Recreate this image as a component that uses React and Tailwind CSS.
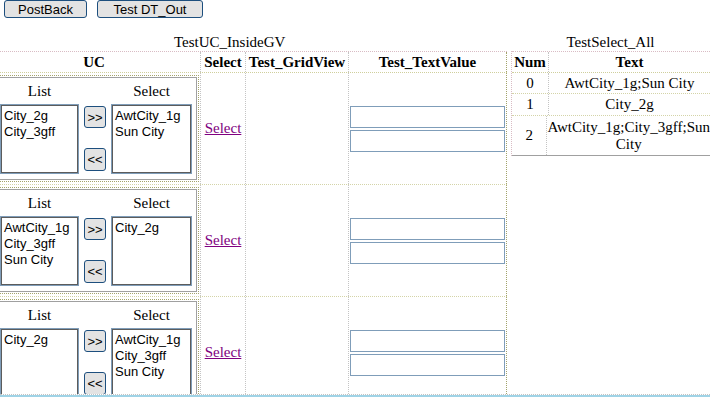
import React from "react";

const ucRows = [
  { list: ["City_2g", "City_3gff"], sel: ["AwtCity_1g", "Sun City"] },
  { list: ["AwtCity_1g", "City_3gff", "Sun City"], sel: ["City_2g"] },
  { list: ["City_2g"], sel: ["AwtCity_1g", "City_3gff", "Sun City"] },
];

const selectAll = [
  { num: "0", text: "AwtCity_1g;Sun City", h: "h-[21px]" },
  { num: "1", text: "City_2g", h: "h-[22px]" },
  { num: "2", text: "AwtCity_1g;City_3gff;Sun City", h: "h-[40px]" },
];

const XpButton = ({ children, className }) => (
  <button
    type="button"
    className={`flex items-center justify-center rounded-[3px] border border-[#1d4f7e] bg-[#e3e3e3] font-['Liberation_Sans',Arial,sans-serif] text-[13px] leading-none text-black ${className}`}
  >
    {children}
  </button>
);

const ListBox = ({ items, width }) => (
  <div
    className={`${width} h-[70px] border border-[#7f9db9] bg-white pl-[3px] pt-[3px] shadow-[inset_0_0_0_1px_#5c5c5c] font-['Liberation_Sans',Arial,sans-serif] text-[13px] leading-[16px] text-black`}
  >
    {items.map((item) => (
      <div key={item} className="whitespace-nowrap">
        {item}
      </div>
    ))}
  </div>
);

const UcBox = ({ row }) => (
  <div className="-ml-[3px] w-[202px] border border-dotted border-[#a3a36b] p-[1px]">
    <div className="border border-[#a0a0a0] pb-[5px]">
      <div className="flex h-[26px] items-center">
        <div className="w-[79px] text-center">List</div>
        <div className="w-[32px]" />
        <div className="w-[81px] text-center">Select</div>
      </div>
      <div className="flex">
        <ListBox items={row.list} width="w-[79px]" />
        <div className="flex w-[32px] flex-col gap-[20px] pl-[5px] pt-[2px]">
          <XpButton className="h-[22px] w-[22px]">&gt;&gt;</XpButton>
          <XpButton className="h-[23px] w-[22px]">&lt;&lt;</XpButton>
        </div>
        <ListBox items={row.sel} width="w-[81px]" />
      </div>
    </div>
  </div>
);

export default function App() {
  return (
    <div className="h-[397px] w-[710px] overflow-hidden border-b-2 border-[#9fd3e6] bg-white font-['Liberation_Serif',serif] text-[15px] text-black">
      <div className="h-[395px] overflow-hidden border-b border-dotted border-[#c4c4c4]">
        {/* buttons */}
        <div className="flex h-[18px] gap-[10px] pl-[4px]">
          <XpButton className="h-[18px] w-[83px]">PostBack</XpButton>
          <XpButton className="h-[18px] w-[106px]">Test DT_Out</XpButton>
        </div>

        <div className="mt-[15px] flex">
          {/* TestUC_InsideGV */}
          <div className="w-[507px]">
            <div className="h-[18px] pl-[174px] leading-[18px]">TestUC_InsideGV</div>
            <div className="flex h-[22px] border-y border-dotted border-t-[#d9bcc4] border-b-[#cfcf9c] font-bold leading-[20px]">
              <div className="w-[200px] pr-[12px] text-center">UC</div>
              <div className="w-[45px] border-l border-dotted border-[#c4c4c4] text-center">Select</div>
              <div className="w-[103px] border-l border-dotted border-[#c4c4c4] text-center">Test_GridView</div>
              <div className="w-[159px] border-x border-dotted border-l-[#c4c4c4] border-r-[#a3a36b] text-center">
                Test_TextValue
              </div>
            </div>
            {ucRows.map((row, i) => (
              <div key={i} className="flex h-[112px] border-b border-dotted border-[#d4d4a8]">
                <div className="w-[200px] pt-[2px]">
                  <UcBox row={row} />
                </div>
                <div className="flex w-[45px] items-center justify-center border-l border-dotted border-[#c4c4c4]">
                  <span className="cursor-pointer text-[#800080] underline">Select</span>
                </div>
                <div className="w-[103px] border-l border-dotted border-[#c4c4c4]" />
                <div className="flex w-[159px] flex-col justify-center gap-[2px] border-l border-r border-dotted border-l-[#c4c4c4] border-r-[#a3a36b] pl-[1px]">
                  <div className="h-[22px] w-[155px] border border-[#7f9db9] bg-white" />
                  <div className="h-[22px] w-[155px] border border-[#7f9db9] bg-white" />
                </div>
              </div>
            ))}
          </div>

          {/* TestSelect_All */}
          <div className="ml-[4px] w-[199px]">
            <div className="h-[18px] text-center leading-[18px]">TestSelect_All</div>
            <div className="border-l border-dotted border-[#d9bcc4]">
              <div className="flex h-[22px] border-y border-dotted border-t-[#d9bcc4] border-b-[#cfcf9c] font-bold leading-[20px]">
                <div className="w-[36px] text-center">Num</div>
                <div className="flex-1 border-l border-dotted border-[#c4c4c4] text-center">Text</div>
              </div>
              {selectAll.map((r, i) => (
                <div
                  key={r.num}
                  className={`flex ${r.h} border-b ${
                    i === selectAll.length - 1 ? "border-solid border-[#a0a0a0]" : "border-dotted border-[#d4d4a8]"
                  }`}
                >
                  <div className="flex w-[36px] items-center justify-center">{r.num}</div>
                  <div className="flex flex-1 items-center justify-center border-l border-dotted border-[#c4c4c4] text-center leading-[17px]">
                    {r.text}
                  </div>
                </div>
              ))}
            </div>
          </div>
        </div>
      </div>
    </div>
  );
}
